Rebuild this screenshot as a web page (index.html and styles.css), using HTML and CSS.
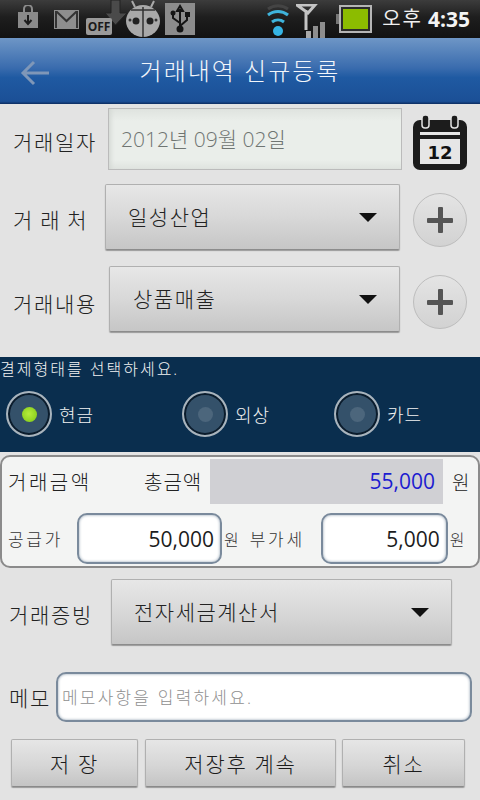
FILE: index.html
```html
<!DOCTYPE html>
<html lang="ko">
  <head>
    <meta charset="utf-8">
    <title>거래내역 신규등록</title>
    <link rel="stylesheet" href="styles.css">
  </head>
  <body>
    <div class="statusbar">
      <div class="status-left">
        <svg class="ic-bag" width="24" height="24" viewBox="0 0 24 24">
          <path d="M8 7V4a4 4 0 0 1 8 0v3" fill="none" stroke="#8c8c8c" stroke-width="2"/>
          <rect x="2" y="7" width="20" height="16" fill="#8a8a8a"/>
          <path d="M12 10v8M8.500 15l3.500 4 3.500-4" fill="none" stroke="#1c1c1c" stroke-width="2"/>
        </svg>
        <svg class="ic-mail" width="25" height="20" viewBox="0 0 25 20">
          <rect width="25" height="19" fill="#8e8e8e"/>
          <path d="M2 18V2h1l9.500 9L22 2h1v16" fill="none" stroke="#333" stroke-width="2"/>
        </svg>
        <div class="ic-off">
          <svg class="off-arrow" width="24" height="26" viewBox="0 0 24 26"><path d="M7 0h9v13h7L11.500 25 1 13h6z" fill="#4a4a4a" stroke="#222"/></svg>
          <span class="off-tag">OFF</span>
        </div>
        <svg class="ic-bug" width="36" height="38" viewBox="0 0 36 38">
          <path d="M10 7L7 1M26 7l3-6" stroke="#aaa" stroke-width="2"/>
          <ellipse cx="18" cy="21" rx="17" ry="16" fill="#a9a9a9"/>
          <path d="M18 7v30M6 10h24" stroke="#333" stroke-width="1.500"/>
          <circle cx="11" cy="21" r="3.500" fill="#222"/><circle cx="25" cy="21" r="3.500" fill="#222"/>
          <circle cx="5" cy="20" r="1.500" fill="#333"/><circle cx="31" cy="20" r="1.500" fill="#333"/>
        </svg>
        <svg class="ic-usb" width="30" height="32" viewBox="0 0 30 32">
          <rect width="30" height="32" fill="#8c8c8c"/>
          <path d="M15 3l-3 5h6zM15 6v20M15 20l-7-5v-4M15 23l7-6v-4" fill="none" stroke="#141414" stroke-width="2"/>
          <circle cx="15" cy="26" r="3.500" fill="#141414"/><circle cx="8" cy="10" r="2.500" fill="#141414"/>
          <rect x="20" y="9" width="5" height="5" fill="#141414"/>
        </svg>
      </div>
      <div class="status-right">
        <svg class="ic-wifi" width="24" height="32" viewBox="0 0 24 32">
          <path d="M2 5a17 17 0 0 1 20 0" fill="none" stroke="#444" stroke-width="3"/>
          <path d="M2 11a16 16 0 0 1 20 0" fill="none" stroke="#3fb4dc" stroke-width="3"/>
          <path d="M6 18a10 10 0 0 1 12 0" fill="none" stroke="#3fb4dc" stroke-width="3"/>
          <circle cx="12" cy="27" r="5" fill="#35b4e4"/>
        </svg>
        <svg class="ic-signal" width="30" height="34" viewBox="0 0 30 34">
          <path d="M1 1h18l-7 8zM10 6v20" fill="none" stroke="#c4c4c4" stroke-width="3"/>
          <rect x="10" y="27" width="5" height="7" fill="#a8a8a8"/><rect x="17" y="22" width="5" height="12" fill="#8e8e8e"/><rect x="24" y="18" width="5" height="16" fill="#8e8e8e"/>
        </svg>
        <svg class="ic-batt" width="36" height="28" viewBox="0 0 36 28">
          <rect x="0" y="9" width="3" height="10" fill="#777"/>
          <rect x="3" y="0" width="33" height="28" fill="#b5b5b5"/>
          <rect x="5" y="2" width="29" height="24" fill="#2b2b2b"/>
          <rect x="7" y="4" width="25" height="20" fill="#8cbc00"/>
        </svg>
        <span class="clock-ampm">오후</span>
        <span class="clock-time">4:35</span>
      </div>
    </div>

    <header class="titlebar">
      <svg class="back" width="30" height="26" viewBox="0 0 30 26">
        <path d="M14 2L3 13l11 11M3 13h26" fill="none" stroke="#7f97b8" stroke-width="3"/>
      </svg>
      <h1>거래내역 신규등록</h1>
    </header>

    <div class="form-top">
      <div class="row row-date">
        <span class="label">거래일자</span>
        <div class="date-box">2012년 09월 02일</div>
        <svg class="cal" width="54" height="55" viewBox="0 0 54 55">
          <rect x="0" y="5" width="54" height="50" rx="7" fill="#1c1c1c"/>
          <rect x="9" y="0" width="7" height="13" rx="3" fill="#1c1c1c" stroke="#e3e3e3" stroke-width="1.500"/>
          <rect x="38" y="0" width="7" height="13" rx="3" fill="#1c1c1c" stroke="#e3e3e3" stroke-width="1.500"/>
          <rect x="7" y="17" width="40" height="3" fill="#e6e6e6"/>
          <rect x="7" y="24" width="40" height="25" fill="#e6e6e6"/>
          <text x="27" y="44" text-anchor="middle" class="cal-day">12</text>
        </svg>
      </div>
      <div class="row row-client">
        <span class="label">거 래 처</span>
        <div class="select sel-client"><span>일성산업</span><i class="caret"></i></div>
        <div class="plus"></div>
      </div>
      <div class="row row-kind">
        <span class="label">거래내용</span>
        <div class="select sel-kind"><span>상품매출</span><i class="caret"></i></div>
        <div class="plus"></div>
      </div>
    </div>

    <section class="pay">
      <p>결제형태를 선택하세요.</p>
      <div class="pay-opts">
        <label class="radio on r-cash"><i></i>현금</label>
        <label class="radio r-credit"><i></i>외상</label>
        <label class="radio r-card"><i></i>카드</label>
      </div>
    </section>

    <section class="amount">
      <div class="amount-top">
        <span class="amount-title">거래금액</span>
        <span class="total-label">총금액</span>
        <div class="total">55,000</div>
        <span class="won-big">원</span>
      </div>
      <div class="amount-bottom">
        <span class="small-label">공급가</span>
        <div class="field f-supply">50,000</div>
        <span class="won">원</span>
        <span class="small-label tax-label">부가세</span>
        <div class="field f-tax">5,000</div>
        <span class="won">원</span>
      </div>
    </section>

    <div class="row row-proof">
      <span class="label">거래증빙</span>
      <div class="select sel-proof"><span>전자세금계산서</span><i class="caret"></i></div>
    </div>

    <div class="row row-memo">
      <span class="label memo-label">메모</span>
      <div class="memo">메모사항을 입력하세요.</div>
    </div>

    <div class="actions">
      <button class="btn btn-save">저 장</button>
      <button class="btn btn-next">저장후 계속</button>
      <button class="btn btn-cancel">취소</button>
    </div>
  </body>
</html>
```

FILE: styles.css
```css
* {
  box-sizing: border-box;
}

html,
body {
  margin: 0;
  padding: 0;
}

body {
  width: 480px;
  height: 800px;
  overflow: hidden;
  background-color: #e3e3e3;
  color: #222;
  font-family: "Open Sans", "Noto Sans CJK KR", sans-serif;
  font-weight: 300;
}

/* status bar */
.statusbar {
  height: 38px;
  display: flex;
  justify-content: space-between;
  background: linear-gradient(#3c3c3c, #1e1e1e 45%, #121212);
  overflow: hidden;
}

.status-left {
  display: flex;
  align-items: flex-start;
  padding-left: 16px;
}

.ic-bag {
  margin-top: 5px;
}

.ic-mail {
  margin: 10px 0 0 14px;
}

.ic-off {
  position: relative;
  width: 42px;
  margin-left: 7px;
}

.off-arrow {
  position: absolute;
  left: 18px;
  top: 0;
}

.off-tag {
  position: absolute;
  left: 0;
  top: 18px;
  width: 26px;
  height: 17px;
  background-color: #9a9a9a;
  border-radius: 2px;
  color: #1a1a1a;
  font-size: 12px;
  font-weight: 700;
  line-height: 17px;
  text-align: center;
}

.ic-bug {
  margin-left: -3px;
}

.ic-usb {
  margin: 3px 0 0 4px;
}

.status-right {
  display: flex;
  align-items: flex-start;
  padding-right: 10px;
}

.ic-wifi {
  margin-top: 4px;
}

.ic-signal {
  margin: 4px 0 0 6px;
}

.ic-batt {
  margin: 5px 0 0 10px;
}

.clock-ampm {
  margin-left: 10px;
  color: #f0f0f0;
  font-size: 20px;
  font-weight: 400;
  letter-spacing: 2px;
  line-height: 38px;
}

.clock-time {
  margin-left: 5px;
  color: #f4f4f4;
  font-size: 21px;
  font-weight: 700;
  line-height: 38px;
}

/* title */
.titlebar {
  height: 66px;
  display: flex;
  align-items: center;
  position: relative;
  background: linear-gradient(#6e96c6, #3a6cae 45%, #1f5aa2 60%, #1b4f96 96%, #0c2c60);
}

.titlebar h1 {
  width: 100%;
  margin: 0;
  padding-bottom: 4px;
  color: #f2f6fb;
  font-size: 24px;
  font-weight: 300;
  letter-spacing: 2px;
  text-align: center;
}

.back {
  position: absolute;
  left: 20px;
  top: 22px;
}

/* form rows */
.form-top {
  padding-top: 4px;
  height: 253px;
}

.row {
  display: flex;
  align-items: center;
}

.label {
  padding-top: 3px;
  font-size: 21px;
  letter-spacing: 1.700px;
  white-space: nowrap;
  color: #222;
}

.row-date {
  height: 62px;
  padding-left: 13px;
}

.row-date .label {
  width: 95px;
}

.date-box {
  width: 294px;
  height: 62px;
  padding-left: 12px;
  border: 1px solid #bbb;
  background: linear-gradient(#dfe3df, #eaeeea 20%, #eaeeea 85%, #dfe3df);
  box-shadow: inset 5px 0 4px -3px #d4d8d4;
  color: #6f7572;
  font-size: 21px;
  line-height: 60px;
}

.cal {
  margin: 6px 0 0 11px;
}

.cal-day {
  fill: #111;
  font-family: "DejaVu Sans", sans-serif;
  font-size: 18px;
  font-weight: 700;
}

.row-client {
  height: 66px;
  margin-top: 14px;
  padding-left: 13px;
}

.row-kind {
  height: 66px;
  margin-top: 16px;
  padding-left: 13px;
}

.select {
  height: 66px;
  display: flex;
  align-items: center;
  justify-content: space-between;
  border: 1px solid #b0b0b0;
  border-bottom-color: #8c8c8c;
  border-radius: 2px;
  background: linear-gradient(#e7e7e7, #d8d8d8 50%, #c6c6c6);
  box-shadow: 0 1px 1px #999;
  font-size: 21px;
  letter-spacing: 1.500px;
  color: #222;
}

.select span {
  margin-bottom: 3px;
}

.sel-client {
  width: 295px;
  margin-right: 13px;
  padding: 0 22px;
}

.row-client .label {
  width: 92px;
  letter-spacing: 1.200px;
}

.sel-kind {
  width: 291px;
  margin-right: 13px;
  padding: 0 22px 0 23px;
}

.row-kind .label {
  width: 96px;
  padding-top: 7px;
}

.caret {
  width: 0;
  height: 0;
  border-left: 9px solid transparent;
  border-right: 9px solid transparent;
  border-top: 9px solid #111;
}

.plus {
  width: 54px;
  height: 54px;
  margin-top: 6px;
  position: relative;
  border: 1px solid #bdbdbd;
  border-radius: 50%;
  background: linear-gradient(#e4e4e4, #d2d2d2);
}

.plus::before,
.plus::after {
  content: "";
  position: absolute;
  background-color: #555;
  border-radius: 1px;
}

.plus::before {
  left: 13px;
  top: 24px;
  width: 26px;
  height: 5px;
}

.plus::after {
  left: 24px;
  top: 13px;
  width: 5px;
  height: 26px;
}

/* payment band */
.pay {
  height: 95px;
  background-color: #0a2e4e;
  color: #f2f2f2;
}

.pay p {
  margin: 0;
  padding-top: 1px;
  font-size: 16px;
  letter-spacing: 2px;
  line-height: 22px;
}

.pay-opts {
  display: flex;
  padding-top: 11px;
}

.radio {
  display: flex;
  align-items: center;
  gap: 7px;
  font-size: 18px;
  letter-spacing: 1px;
}

.radio i {
  width: 46px;
  height: 46px;
  display: flex;
  align-items: center;
  justify-content: center;
  border: 2px solid #a9b4bd;
  border-radius: 50%;
  background-color: #34516a;
  box-shadow: inset 0 0 0 2px #0b1c2c;
}

.radio i::after {
  content: "";
  width: 15px;
  height: 15px;
  border-radius: 50%;
  background-color: #4c667c;
}

.radio.on i::after {
  background: radial-gradient(circle at 45% 45%, #b6ec3c, #7cc614);
}

.r-cash {
  margin-left: 6px;
  width: 176px;
}

.r-credit {
  width: 152px;
}

/* amount panel */
.amount {
  height: 113px;
  margin-top: 3px;
  padding: 2px 0 0 6px;
  border: 2px solid #8b8b8b;
  border-radius: 10px;
  background-color: #f3f4f3;
}

.amount-top {
  height: 45px;
  display: flex;
  align-items: center;
}

.amount-title {
  width: 136px;
  font-size: 20px;
  letter-spacing: 2.500px;
}

.total-label {
  width: 66px;
  font-size: 20px;
  letter-spacing: 1px;
}

.total {
  width: 233px;
  height: 45px;
  padding-right: 8px;
  background-color: #d0d0d4;
  color: #1c1cd0;
  font-size: 21px;
  font-weight: 400;
  line-height: 45px;
  text-align: right;
}

.won-big {
  margin-left: 9px;
  font-size: 19px;
}

.amount-bottom {
  display: flex;
  align-items: center;
  margin-top: 9px;
}

.small-label {
  width: 69px;
  font-size: 17px;
  letter-spacing: 2.700px;
  color: #333;
}

.tax-label {
  width: 71px;
  margin-left: 11px;
}

.field {
  height: 51px;
  border: 2px solid #7a8a9c;
  border-radius: 10px;
  background-color: #fff;
  box-shadow: inset 0 0 3px #8fa0b0;
  color: #1c1c1c;
  font-size: 21px;
  font-weight: 400;
  line-height: 49px;
  padding-right: 6px;
  text-align: right;
}

.f-supply {
  width: 145px;
}

.f-tax {
  width: 127px;
}

.won {
  margin-left: 2px;
  font-size: 16px;
  color: #333;
}

/* proof + memo */
.row-proof {
  height: 66px;
  margin-top: 11px;
  padding-left: 9px;
}

.row-proof .label {
  width: 102px;
}

.sel-proof {
  width: 341px;
  padding: 0 22px;
}

.row-memo {
  height: 50px;
  margin-top: 27px;
  padding-left: 9px;
}

.memo-label {
  width: 47px;
  padding-top: 0;
}

.memo {
  width: 416px;
  height: 50px;
  padding-left: 4px;
  border: 2px solid #7a8a9c;
  border-radius: 10px;
  background-color: #fff;
  box-shadow: inset 0 0 3px #8fa0b0;
  color: #8f8f8f;
  font-size: 17px;
  letter-spacing: 2.200px;
  line-height: 47px;
}

/* bottom buttons */
.actions {
  display: flex;
  margin-top: 17px;
  padding-left: 11px;
}

.btn {
  height: 48px;
  padding: 0;
  border: 1px solid #b0b0b0;
  border-bottom-color: #8a8a8a;
  border-radius: 2px;
  background: linear-gradient(#e6e6e6, #d6d6d6 55%, #c4c4c4);
  box-shadow: 0 1px 1px #999;
  color: #1c1c1c;
  font-family: inherit;
  font-size: 21px;
  font-weight: 300;
  letter-spacing: 1.700px;
}

.btn-save {
  width: 127px;
  margin-right: 7px;
}

.btn-next {
  width: 191px;
  margin-right: 6px;
}

.btn-cancel {
  width: 123px;
}
```
